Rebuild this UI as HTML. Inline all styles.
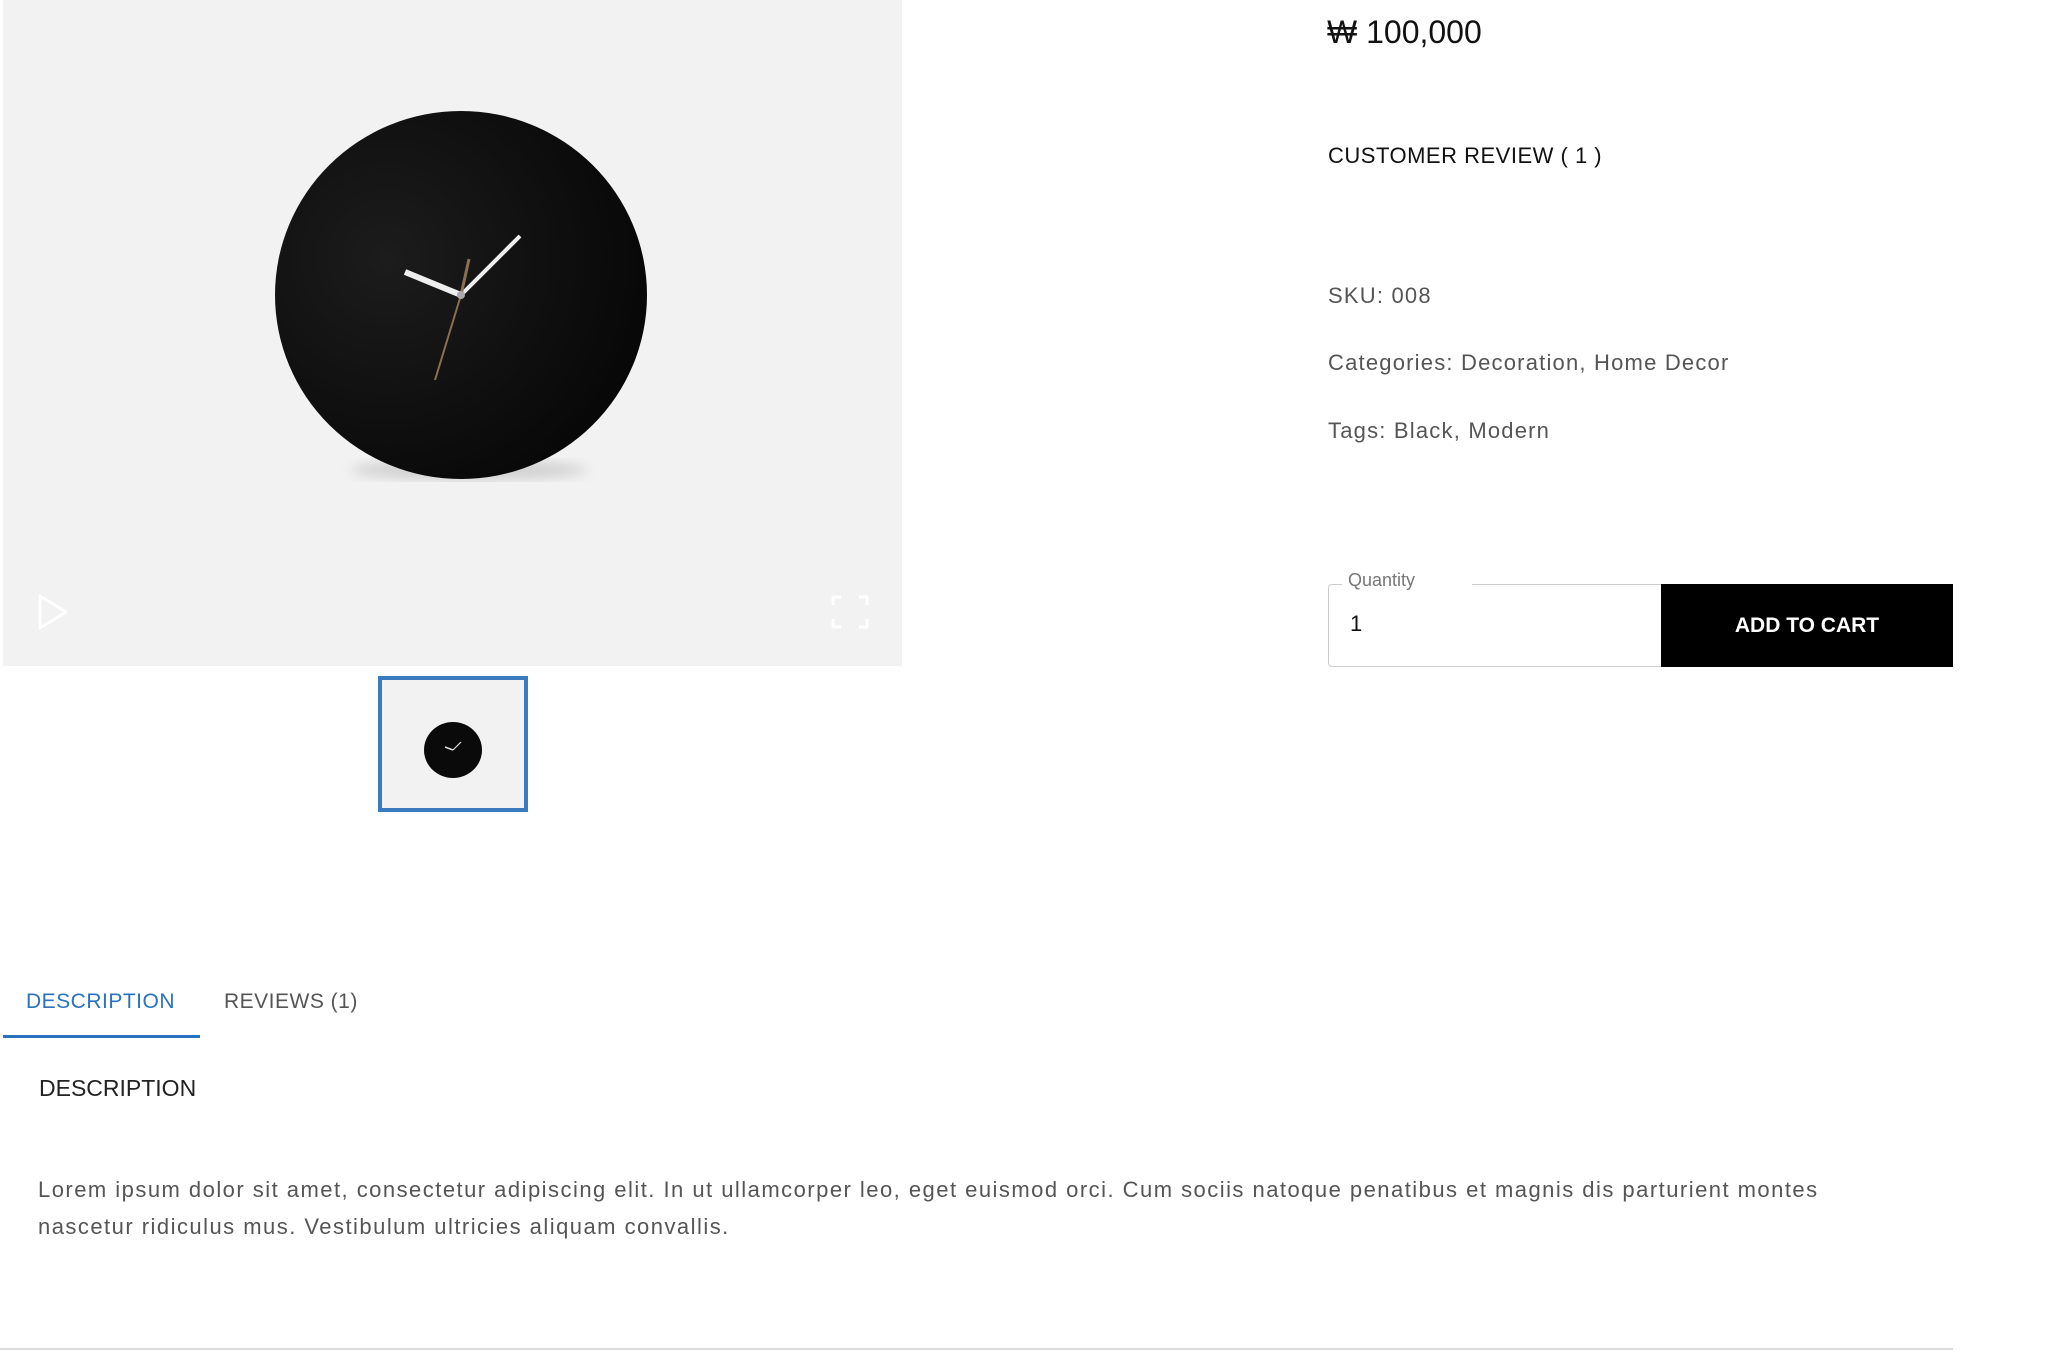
<!DOCTYPE html>
<html><head><meta charset="utf-8">
<style>
*{margin:0;padding:0;box-sizing:border-box}
body{width:2064px;height:1359px;background:#fff;font-family:"Liberation Sans","Noto Sans CJK KR",sans-serif;position:relative;overflow:hidden}
.a{position:absolute;white-space:nowrap}
.m{font-size:22px;color:#555;letter-spacing:1.2px}
</style></head><body>
<div class="a" style="left:3px;top:0;width:899px;height:666px;background:#f2f2f2"></div>
<svg class="a" style="left:3px;top:0" width="899" height="666">
<defs><radialGradient id="g" cx="0.3" cy="0.4" r="0.8"><stop offset="0" stop-color="#1c1c1c"/><stop offset="1" stop-color="#050505"/></radialGradient>
<filter id="s"><feGaussianBlur stdDeviation="6"/></filter></defs>
<ellipse cx="466" cy="470" rx="118" ry="10" fill="#d0d0d0" filter="url(#s)"/>
<ellipse cx="458" cy="295" rx="186" ry="184" fill="url(#g)"/>
<line x1="458" y1="295" x2="402" y2="272" stroke="#eee" stroke-width="6"/>
<line x1="458" y1="295" x2="517" y2="236" stroke="#eee" stroke-width="4"/>
<line x1="458" y1="295" x2="432" y2="380" stroke="#8a7050" stroke-width="2"/>
<line x1="458" y1="295" x2="466" y2="259" stroke="#8a7050" stroke-width="3"/>
<circle cx="458" cy="295" r="4" fill="#aaa"/>
<path d="M37 596 L37 628 L63 612 Z" fill="none" stroke="#fff" stroke-width="3" stroke-linejoin="round"/>
<path d="M830 605v-8h8 M856 597h8v8 M864 619v8h-8 M838 627h-8v-8" fill="none" stroke="#fff" stroke-width="3"/>
</svg>
<div class="a" style="left:378px;top:676px;width:150px;height:136px;border:4px solid #3a7bbf;background:#f2f2f2"></div>
<svg class="a" style="left:378px;top:676px" width="150" height="136">
<ellipse cx="75" cy="74" rx="29" ry="28" fill="#0a0a0a"/>
<line x1="75" y1="74" x2="67" y2="71" stroke="#ddd" stroke-width="1.5"/>
<line x1="75" y1="74" x2="83" y2="66" stroke="#ddd" stroke-width="1.2"/>
</svg>
<div class="a" style="left:1327px;top:14px;font-size:32px;color:#111">₩ 100,000</div>
<div class="a" style="left:1328px;top:143px;font-size:22px;color:#111;letter-spacing:0.5px">CUSTOMER REVIEW ( 1 )</div>
<div class="a m" style="left:1328px;top:283px">SKU: 008</div>
<div class="a m" style="left:1328px;top:350px">Categories: Decoration, Home Decor</div>
<div class="a m" style="left:1328px;top:418px">Tags: Black, Modern</div>
<div class="a" style="left:1328px;top:584px;width:334px;height:83px;border:1px solid #ccc;border-radius:4px 0 0 4px"></div>
<div class="a" style="left:1342px;top:570px;font-size:18px;color:#777;background:#fff;padding:0 6px;width:130px">Quantity</div>
<div class="a" style="left:1350px;top:611px;font-size:22px;color:#111">1</div>
<div class="a" style="left:1661px;top:584px;width:292px;height:83px;background:#000;color:#fff;font-size:21px;font-weight:bold;display:flex;align-items:center;justify-content:center">ADD TO CART</div>
<div class="a" style="left:26px;top:990px;font-size:21px;color:#2a72c0;letter-spacing:0.5px">DESCRIPTION</div>
<div class="a" style="left:224px;top:990px;font-size:21px;color:#555;letter-spacing:0.5px">REVIEWS (1)</div>
<div class="a" style="left:3px;top:1035px;width:197px;height:3px;background:#2a72c0"></div>
<div class="a" style="left:39px;top:1075px;font-size:23px;color:#222">DESCRIPTION</div>
<div class="a m" style="left:38px;top:1171px;line-height:37px;letter-spacing:1.47px">Lorem ipsum dolor sit amet, consectetur adipiscing elit. In ut ullamcorper leo, eget euismod orci. Cum sociis natoque penatibus et magnis dis parturient montes<br>nascetur ridiculus mus. Vestibulum ultricies aliquam convallis.</div>
<div class="a" style="left:0;top:1348px;width:1953px;height:2px;background:#ddd"></div>
</body></html>
